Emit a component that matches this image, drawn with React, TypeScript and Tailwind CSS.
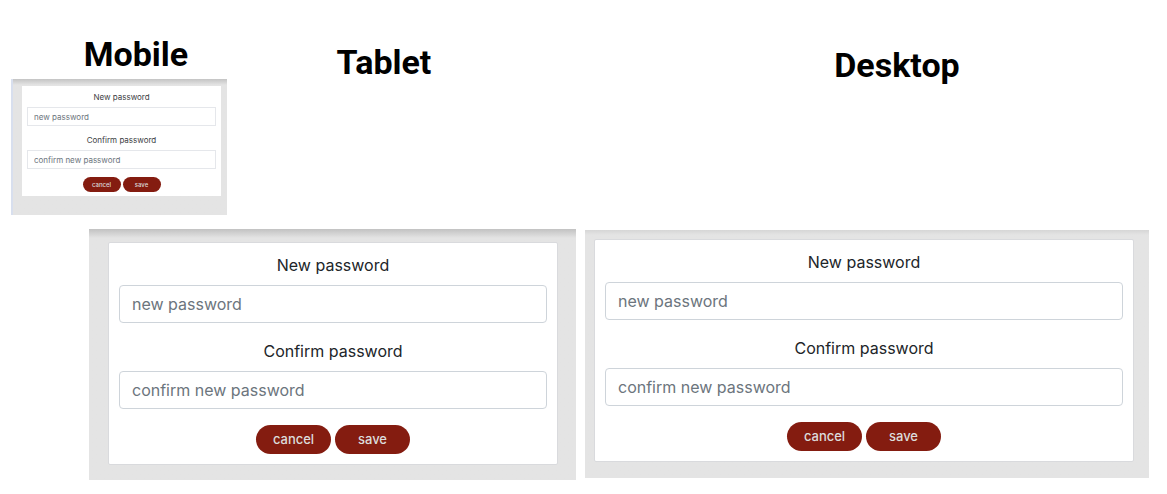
import { useId } from "react";

type Size = "small" | "regular";

const styles = {
  small: {
    card: "px-[5px] pt-[5px] pb-1",
    field: "mb-2",
    label: "mb-1 text-[8px] leading-3 text-[#3c4043]",
    input: "h-[19px] border-[#e5e7eb] px-1.5 text-[8px]",
    actions: "gap-0.5",
    button: "h-[15px] w-[38px] text-[6px]",
  },
  regular: {
    card: "rounded-xs border border-[#d9dadd] p-2.5",
    field: "mb-4",
    label: "mb-2 text-[16px] leading-6 text-[#212529]",
    input: "h-[38px] rounded-[4px] border-[#ced4da] px-3 text-[16px]",
    actions: "gap-1",
    button: "h-[29px] w-[75px] text-[13px]",
  },
};

function Field({ label, placeholder, size }: { label: string; placeholder: string; size: Size }) {
  const id = useId();
  const s = styles[size];
  return (
    <div className={`flex flex-col ${s.field}`}>
      <label htmlFor={id} className={`text-center ${s.label}`}>{label}</label>
      <input
        id={id}
        type="password"
        placeholder={placeholder}
        className={`w-full min-w-0 border bg-white text-[#212529] placeholder:text-[#6c757d] ${s.input}`}
      />
    </div>
  );
}

function PasswordForm({ size }: { size: Size }) {
  const s = styles[size];
  const button = `flex items-center justify-center rounded-full bg-[#841c10] font-medium text-[#dcdcdc] ${s.button}`;
  return (
    <form className={`bg-white ${s.card}`} onSubmit={(e) => e.preventDefault()}>
      <Field label="New password" placeholder="new password" size={size} />
      <Field label="Confirm password" placeholder="confirm new password" size={size} />
      <div className={`flex justify-center ${s.actions}`}>
        <button type="button" className={button}>cancel</button>
        <button type="submit" className={button}>save</button>
      </div>
    </form>
  );
}

const heading = "text-center font-['Roboto',sans-serif] text-[34px] leading-10 font-bold text-black";

export default function App() {
  return (
    <main className="bg-white pb-3.5 font-['Inter',sans-serif]">
      <div className="grid grid-cols-[227px_minmax(0,314fr)_minmax(0,626fr)] items-start">
        <section className="pt-[34px] pl-[11px]">
          <h2 className={`${heading} pb-[5px] pl-[34px]`}>Mobile</h2>
          <div className="border-l-2 border-[#d8dfee] bg-[#e4e4e4] bg-linear-to-b from-[#c4c4c4] to-[#e4e4e4] to-[6px] pt-[7px] pr-1.5 pb-[19px] pl-[9px]">
            <PasswordForm size="small" />
          </div>
        </section>
        <h2 className={`${heading} pt-[42px]`}>Tablet</h2>
        <h2 className={`${heading} pt-[45px] pl-[86px]`}>Desktop</h2>
      </div>
      <div className="mt-3.5 grid grid-cols-[minmax(0,487fr)_minmax(0,564fr)] items-start gap-[9px] pr-[18px] pl-[89px]">
        <section aria-label="Tablet" className="bg-[#e4e4e4] bg-linear-to-b from-[#c2c2c2] to-[#e4e4e4] to-[9px] pt-[13px] pr-[18px] pb-[15px] pl-[19px]">
          <PasswordForm size="regular" />
        </section>
        <section aria-label="Desktop" className="mt-px bg-[#e4e4e4] bg-linear-to-b from-[#d6d6d6] to-[#e4e4e4] to-[5px] pt-[9px] pr-[15px] pb-4 pl-[9px]">
          <PasswordForm size="regular" />
        </section>
      </div>
    </main>
  );
}
